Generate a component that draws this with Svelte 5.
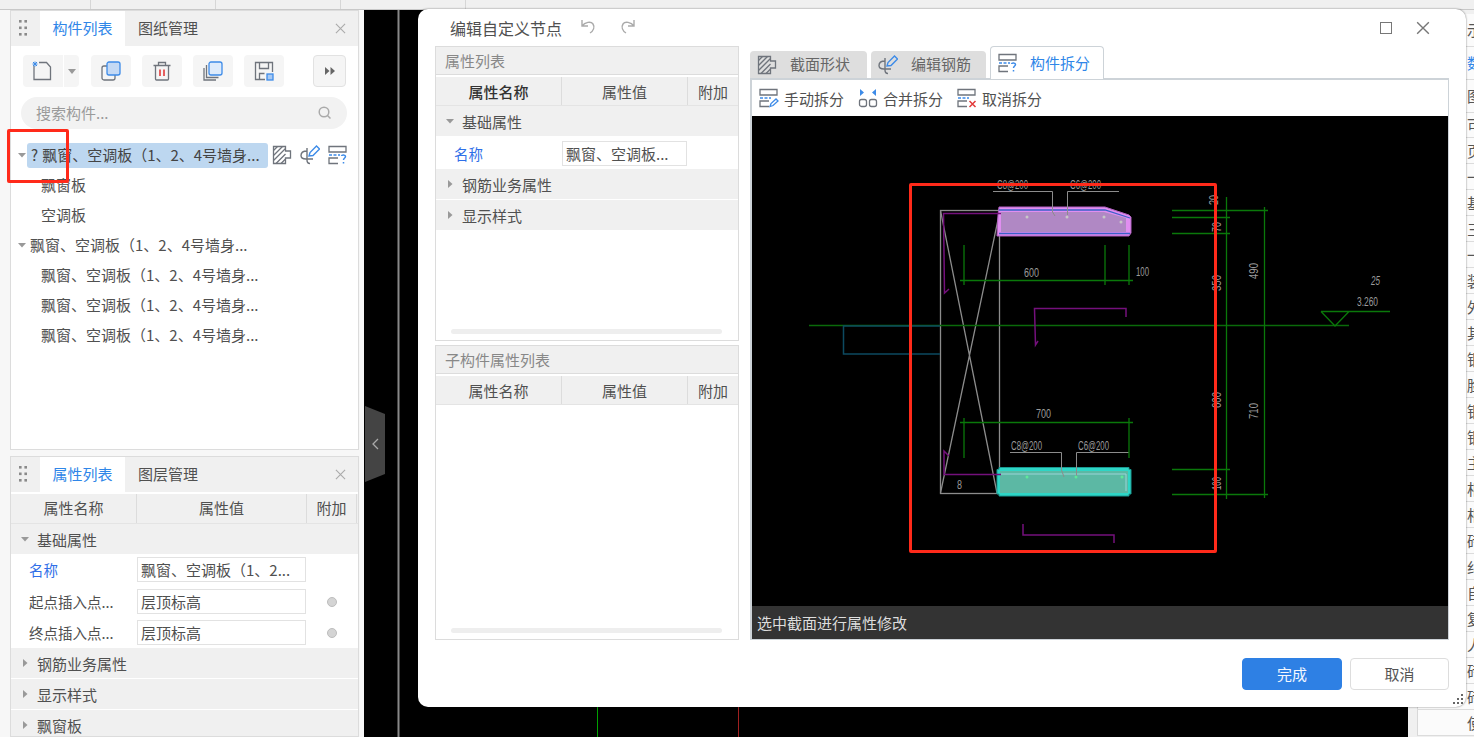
<script>
	const longName = '飘窗、空调板（1、2、4号墙身...';
	const tree = [
		{ label: '飘窗板', child: true },
		{ label: '空调板', child: true },
		{ label: longName, child: false },
		{ label: longName, child: true },
		{ label: longName, child: true },
		{ label: longName, child: true }
	];
	const rightEdge = ['示', '数', '图', '可', '页', '一', '基', '三', '一', '装', '外', '其', '钢', '脸', '钢', '钢', '主', '相', '相', '砖', '纠', '自', '复', '人', '砖', '砖', '使'];
	const cells = [91, 125, 125, 125];
</script>

{#snippet grip()}
	<svg class="grip" width="8" height="18" viewBox="0 0 8 18">
		{#each [0, 6.5, 13] as y}
			<rect x="0" {y} width="2.6" height="2.6" fill="#8a8a8a" />
			<rect x="5.4" {y} width="2.6" height="2.6" fill="#8a8a8a" />
		{/each}
	</svg>
{/snippet}

{#snippet closeX(size, colour)}
	<svg width={size} height={size} viewBox="0 0 12 12" fill="none" stroke={colour} stroke-width="1.2">
		<path d="M1 1l10 10M11 1L1 11" />
	</svg>
{/snippet}

{#snippet hatchIcon()}
	<svg width="20" height="20" viewBox="0 0 20 20" fill="none" stroke="#6f747c" stroke-width="1.3">
		<path d="M1.5 1.5h12v4.5h5v7h-5v5.5h-12z" />
		<path d="M1.5 5.5l4-4M1.5 10.5l9-9M1.5 15.5l12-12M4 18.500l9.500-9.500M9 18.500l4.500-4.500" />
	</svg>
{/snippet}

{#snippet rebarIcon()}
	<svg width="20" height="20" viewBox="0 0 20 20" fill="none" stroke-width="1.4">
		<path d="M7 6C3 6 1 8 1 10.500C1 13 3 14 6 14H13M7 3V15C7 17 8 18.500 10 18.500" stroke="#6f747c" />
		<path d="M9 11l1-3.500L16.500 1l3 3L13 10.500z" stroke="#3d8be8" />
	</svg>
{/snippet}

{#snippet splitIcon(mark)}
	<svg width="20" height="20" viewBox="0 0 20 20" fill="none" stroke-width="1.3">
		<path d="M1 7V1.500h17V7zM10 13H1v5.500h9" stroke="#6f747c" />
		<path d="M1 10h11" stroke="#3d8be8" stroke-dasharray="3 1.500" />
		{#if mark === 'q'}
			<path d="M13.500 11c.2-1.500 4-1.500 4 .5c0 1.500-2 1.500-2 3.500M15.500 17v1.600" stroke="#3d8be8" stroke-width="1.500" />
		{:else if mark === 'pen'}
			<path d="M11 18.500l1-3l5-4.500l2 2l-5 4.500z" stroke="#3d8be8" />
		{:else}
			<path d="M12.500 13l6 6M18.500 13l-6 6" stroke="#e23a3a" stroke-width="1.500" />
		{/if}
	</svg>
{/snippet}

{#snippet caret(open)}
	<svg class="caret" width="8" height="8" viewBox="0 0 8 8">
		{#if open}
			<path d="M0 2h8L4 6.500z" fill="#999" />
		{:else}
			<path d="M2 0l4.500 4L2 8z" fill="#999" />
		{/if}
	</svg>
{/snippet}

{#snippet propHead()}
	<div class="prop-head">
		<span>属性名称</span>
		<span>属性值</span>
		<span>附加</span>
	</div>
{/snippet}

{#snippet group(label, open)}
	<div class="group">
		{@render caret(open)}
		<span>{label}</span>
	</div>
{/snippet}

{#snippet propRow(label, value, isBlue, hasDot)}
	<div class="prop-row">
		<span class="prop-name" class:blue={isBlue}>{label}</span>
		<span class="prop-value">{value}</span>
		<span class="prop-extra">
			{#if hasDot}<i class="dot"></i>{/if}
		</span>
	</div>
{/snippet}

<div class="page">
	<div class="top-strip">
		{#each cells as width}
			<i class="top-cell" style="width: {width}px"></i>
		{/each}
	</div>

	<div class="workspace">
		<aside class="left-col">
			<section class="panel panel-tree">
				<header class="panel-head">
					{@render grip()}
					<span class="tab active">构件列表</span>
					<span class="tab">图纸管理</span>
					<span class="panel-close">{@render closeX(11, '#aaa')}</span>
				</header>

				<div class="tools">
					<div class="tool tool-split">
						<svg width="20" height="20" viewBox="0 0 20 20" fill="none">
							<path d="M2 5V18.500h16.500V6l-4-4.500H7" stroke="#6f747c" stroke-width="1.300" />
							<path d="M1 1l4 4M5 1L1 5M3 .5v5M.5 3h5" stroke="#3d8be8" stroke-width="1" />
						</svg>
						<span class="tool-drop"><svg width="8" height="5" viewBox="0 0 8 5"><path d="M0 0h8L4 5z" fill="#999" /></svg></span>
					</div>
					<div class="tool">
						<svg width="20" height="20" viewBox="0 0 20 20" fill="none" stroke="#6f747c" stroke-width="1.300">
							<rect x="1" y="5" width="13" height="14" rx="2" />
							<rect x="6" y="1" width="13" height="13" rx="2" fill="#c4d9f4" stroke="#3d8be8" />
						</svg>
					</div>
					<div class="tool">
						<svg width="20" height="20" viewBox="0 0 20 20" fill="none" stroke="#6f747c" stroke-width="1.300">
							<path d="M1.500 4.500h17M6.500 4.500V1.500h7v3M3.500 4.500v13.500c0 .5.500 1 1 1h11c.5 0 1-.5 1-1V4.500" />
							<path d="M8 8.500v6.500M12 8.500v6.500" stroke="#e23a3a" stroke-width="1.600" />
						</svg>
					</div>
					<div class="tool">
						<svg width="20" height="20" viewBox="0 0 20 20" fill="none" stroke="#6f747c" stroke-width="1.300">
							<path d="M3.500 4v12.500h12M1 7v12h12" />
							<rect x="6" y="1" width="13" height="13" rx="2" fill="#deebfb" stroke="#3d8be8" />
						</svg>
					</div>
					<div class="tool">
						<svg width="20" height="20" viewBox="0 0 20 20" fill="none" stroke="#6f747c" stroke-width="1.300">
							<path d="M11 18.500H1.500v-17h17V11" />
							<path d="M5.500 1.500v6h9v-6M5.500 18.500v-6h5" />
							<rect x="13" y="13" width="6" height="6" fill="#a8c9f2" stroke="#3d8be8" />
						</svg>
					</div>
					<div class="tool tool-more">
						<svg width="10" height="8" viewBox="0 0 10 8"><path d="M0 0l4.500 4L0 8zM5.500 0L10 4L5.500 8z" fill="#666" /></svg>
					</div>
				</div>

				<div class="search">
					<span class="search-text">搜索构件...</span>
					<svg width="14" height="14" viewBox="0 0 14 14" fill="none" stroke="#aaa" stroke-width="1.500">
						<circle cx="6" cy="6" r="4.800" />
						<path d="M9.500 9.500l3 3" />
					</svg>
				</div>

				<div class="tree">
					<div class="tree-row">
						{@render caret(true)}
						<span class="tree-selected"><span class="tree-mark">?</span>{longName}</span>
						<span class="tree-actions">
							{@render hatchIcon()}
							{@render rebarIcon()}
							{@render splitIcon('q')}
						</span>
					</div>
					{#each tree as row}
						<div class="tree-row" class:child={row.child}>
							{#if !row.child}{@render caret(true)}{/if}
							<span class="tree-label">{row.label}</span>
						</div>
					{/each}
				</div>
			</section>

			<section class="panel panel-props">
				<header class="panel-head">
					{@render grip()}
					<span class="tab active">属性列表</span>
					<span class="tab">图层管理</span>
					<span class="panel-close">{@render closeX(11, '#aaa')}</span>
				</header>
				<div class="props main-props">
					{@render propHead()}
					{@render group('基础属性', true)}
					{@render propRow('名称', '飘窗、空调板（1、2...', true, false)}
					{@render propRow('起点插入点...', '层顶标高', false, true)}
					{@render propRow('终点插入点...', '层顶标高', false, true)}
					{@render group('钢筋业务属性', false)}
					{@render group('显示样式', false)}
					{@render group('飘窗板', false)}
				</div>
			</section>
		</aside>

		<main class="canvas">
			<svg class="canvas-lines" width="1044" height="727" viewBox="364 10 1044 727">
				<path d="M398.500 10V737" stroke="#888" stroke-width="2" />
				<path d="M597.500 700V737" stroke="#00a000" stroke-width="1" />
				<path d="M738.500 700V737" stroke="#a02020" stroke-width="1" />
			</svg>
		</main>

		<aside class="right-col">
			{#each rightEdge as word, i}
				<div class="edge-row" class:blue={i === 1}>{word}</div>
			{/each}
		</aside>
	</div>

	<div class="collapse-tab">
		<svg width="7" height="12" viewBox="0 0 7 12" fill="none" stroke="#aaa" stroke-width="1.300"><path d="M6 1L1 6l5 5" /></svg>
	</div>

	<div class="dialog">
		<header class="dialog-head">
			<span class="dialog-title">编辑自定义节点</span>
			<svg class="undo" width="18" height="16" viewBox="0 0 18 16" fill="none" stroke="#aaa" stroke-width="1.400">
				<path d="M2 1v6h6M2 7c3-4 9-5 11-2c2 3 .5 7-3 9" />
			</svg>
			<svg class="redo" width="18" height="16" viewBox="0 0 18 16" fill="none" stroke="#aaa" stroke-width="1.400">
				<path d="M16 1v6h-6M16 7c-3-4-9-5-11-2c-2 3-.5 7 3 9" />
			</svg>
			<span class="win-max"></span>
			<span class="win-close">{@render closeX(14, '#777')}</span>
		</header>

		<div class="dialog-body">
			<div class="attr-col">
				<section class="attr-box">
					<div class="attr-title">属性列表</div>
					<div class="props dialog-props">
						<div class="bold-head">{@render propHead()}</div>
						{@render group('基础属性', true)}
						{@render propRow('名称', '飘窗、空调板...', true, false)}
						{@render group('钢筋业务属性', false)}
						{@render group('显示样式', false)}
					</div>
					<div class="scroll-track"></div>
				</section>
				<section class="attr-box">
					<div class="attr-title">子构件属性列表</div>
					<div class="props dialog-props">
						{@render propHead()}
					</div>
					<div class="scroll-track"></div>
				</section>
			</div>

			<div class="view-col">
				<div class="view-tabs">
					<div class="view-tab">{@render hatchIcon()}<span>截面形状</span></div>
					<div class="view-tab">{@render rebarIcon()}<span>编辑钢筋</span></div>
					<div class="view-tab active">{@render splitIcon('q')}<span>构件拆分</span></div>
				</div>
				<div class="view-box">
					<div class="view-tools">
						<span class="view-tool">{@render splitIcon('pen')}手动拆分</span>
						<span class="view-tool">
							<svg width="20" height="20" viewBox="0 0 20 20" fill="none">
								<path d="M2 1l4 3.500l-4 3.500zM18 1l-4 3.500l4 3.500z" fill="#3d8be8" />
								<rect x="1.500" y="11.500" width="7" height="7" rx="2" stroke="#6f747c" stroke-width="1.300" />
								<rect x="11.500" y="11.500" width="7" height="7" rx="2" stroke="#6f747c" stroke-width="1.300" />
							</svg>
							合并拆分
						</span>
						<span class="view-tool">{@render splitIcon('x')}取消拆分</span>
					</div>

					<svg class="cad" width="696" height="490" viewBox="752 116 696 490" fill="none">
						<!-- wall outline and cross -->
						<g stroke="#8c8c8c" stroke-width="1.300">
							<rect x="940.500" y="210.500" width="59" height="283" />
							<path d="M940.500 210.500L997 493M999 215L940.500 493" />
						</g>

						<!-- axis and blue outline -->
						<path d="M809 325.500H1349" stroke="#0a6a0a" stroke-width="1.500" />
						<path d="M940 326H843.500V354H940" stroke="#0c4a60" stroke-width="1.500" />

						<!-- purple section -->
						<path d="M999 207H1105L1129 215L1131 217V233L1129 236H997L998 215z" fill="#e08ef0" stroke="#b060c0" />
						<path d="M1001 212H1104L1126 218V232H1001z" fill="#b088c4" />
						<path d="M999 210H1105L1130 218M999 233.500H1130" stroke="#3a62c8" stroke-width="1.300" />

						<!-- teal section -->
						<path d="M999 467.500H1129V469.500H1131V494H1129V496H999V494H997V469.500H999z" fill="#2ed6c6" stroke="#1a9a92" />
						<path d="M1000 471H1128V493H1000z" fill="#5cb8a4" />
						<path d="M1001 474H1126V491" stroke="#9ad4d8" stroke-width="1" />

						<!-- purple rebar lines -->
						<g stroke="#74107c" stroke-width="1.500">
							<path d="M1001 213.500H943.500L944.500 293L949 289" />
							<path d="M1126 317V308.500H1034.500L1035.500 345L1038 341" />
							<path d="M949 456L944 451V474.500H1001" />
							<path d="M1023 524V535H1114V543" />
						</g>

						<!-- leaders -->
						<g stroke="#8c8c8c" stroke-width="1">
							<path d="M993 191.500H1052.500V212L1055 216" />
							<path d="M1119 191.500H1067.500V215" />
							<path d="M1010 452.500H1061.500V470L1064 477" />
							<path d="M1129 452.500H1076.500V477" />
						</g>

						<!-- dimension lines -->
						<g stroke="#0a780a" stroke-width="1.300">
							<path d="M964 245V285M1105 245V285M1129 245V285M960 280.500H1133" />
							<path d="M964 418V458M1129 418V458M960 422.500H1133" />
							<path d="M1172 210.500H1268M1172 217.500H1230M1172 233.500H1230M1172 469.500H1230M1172 494.500H1268" />
							<path d="M1226.500 197V499M1264.500 207V498" />
							<path d="M1321 311.500H1390M1321 311.500L1335 326L1349 311.500" />
						</g>

						<!-- rebar dots -->
						<g fill="#c8c8c8">
							<circle cx="1027" cy="217" r="1.500" />
							<circle cx="1067" cy="217" r="1.500" />
							<circle cx="1104" cy="217" r="1.500" />
							<circle cx="1121" cy="222" r="1.500" />
						</g>
						<g fill="#5ee89a">
							<circle cx="1027" cy="477" r="1.500" />
							<circle cx="1076" cy="477" r="1.500" />
							<circle cx="1122" cy="477" r="1.500" />
						</g>

						<!-- labels -->
						<g class="cad-text">
							<text x="997" y="189" textLength="31" lengthAdjust="spacingAndGlyphs">C8@200</text>
							<text x="1070" y="189" textLength="31" lengthAdjust="spacingAndGlyphs">C6@200</text>
							<text x="1024" y="277" textLength="15" lengthAdjust="spacingAndGlyphs">600</text>
							<text x="1136" y="276" textLength="13" lengthAdjust="spacingAndGlyphs">100</text>
							<text x="1036" y="418" textLength="15" lengthAdjust="spacingAndGlyphs">700</text>
							<text x="1011" y="450" textLength="31" lengthAdjust="spacingAndGlyphs">C8@200</text>
							<text x="1078" y="450" textLength="31" lengthAdjust="spacingAndGlyphs">C6@200</text>
							<text x="1357" y="306" textLength="21" lengthAdjust="spacingAndGlyphs">3.260</text>
							<text x="1371" y="285" textLength="9" lengthAdjust="spacingAndGlyphs" font-style="italic">25</text>
							<text x="957" y="489" textLength="5" lengthAdjust="spacingAndGlyphs">8</text>
							<text transform="translate(1218 205) rotate(-90)" textLength="10" lengthAdjust="spacingAndGlyphs">20</text>
							<text transform="translate(1221 232) rotate(-90)" textLength="10" lengthAdjust="spacingAndGlyphs">70</text>
							<text transform="translate(1221 291) rotate(-90)" textLength="16" lengthAdjust="spacingAndGlyphs">350</text>
							<text transform="translate(1258 279) rotate(-90)" textLength="16" lengthAdjust="spacingAndGlyphs">490</text>
							<text transform="translate(1221 408) rotate(-90)" textLength="16" lengthAdjust="spacingAndGlyphs">600</text>
							<text transform="translate(1258 419) rotate(-90)" textLength="16" lengthAdjust="spacingAndGlyphs">710</text>
							<text transform="translate(1221 490) rotate(-90)" textLength="13" lengthAdjust="spacingAndGlyphs">100</text>
						</g>
					</svg>

					<div class="view-status">选中截面进行属性修改</div>
				</div>
			</div>
		</div>

		<footer class="dialog-foot">
			<button class="btn primary">完成</button>
			<button class="btn">取消</button>
		</footer>

		<svg class="resize-grip" width="10" height="10" viewBox="0 0 10 10">
			<path d="M8 0h2v2H8zM4 4h2v2H4zM8 4h2v2H8zM0 8h2v2H0zM4 8h2v2H4zM8 8h2v2H8z" fill="#666" />
		</svg>
	</div>

	<!-- red markup drawn over the screenshot -->
	<div class="markup markup-tree"></div>
	<div class="markup markup-cad"></div>
</div>

<style>
	:global(body) {
		margin: 0;
		background: #f0f0f0;
	}

	.page {
		position: relative;
		width: 1474px;
		height: 737px;
		overflow: hidden;
		display: flex;
		flex-direction: column;
		font-family: 'Noto Sans CJK SC', 'Noto Sans', sans-serif;
		font-size: 15px;
		color: #505050;
	}

	.top-strip {
		height: 9px;
		flex: none;
		display: flex;
		background: #f0f0f0;
		border-bottom: 1px solid #c8c8c8;
	}

	.top-cell {
		border-right: 1px solid #d6d6d6;
		box-sizing: border-box;
	}

	.workspace {
		flex: 1;
		min-height: 0;
		display: flex;
	}

	.left-col {
		width: 364px;
		flex: none;
		box-sizing: border-box;
		padding-left: 10px;
		background: #f7f7f7;
		display: flex;
		flex-direction: column;
		gap: 6px;
	}

	.panel {
		width: 349px;
		box-sizing: border-box;
		background: #fff;
		border: 1px solid #dcdcdc;
	}

	.panel-tree {
		height: 440px;
	}

	.panel-props {
		flex: 1;
		min-height: 0;
		overflow: hidden;
	}

	.panel-head {
		height: 35px;
		display: flex;
		align-items: stretch;
		background: #f0f0f0;
		position: relative;
	}

	.grip {
		margin: 9px 13px 0 8px;
		flex: none;
	}

	.tab {
		width: 85px;
		display: flex;
		align-items: center;
		justify-content: center;
		flex: none;
		box-sizing: border-box;
		padding-bottom: 2px;
	}

	.tab.active {
		background: #fff;
		color: #2f86e8;
	}

	.tab + .tab {
		width: 86px;
	}

	.panel-close {
		margin-left: auto;
		margin-right: 12px;
		display: flex;
		align-items: center;
	}

	.tools {
		display: flex;
		padding: 9px 0 0 12px;
		height: 32px;
	}

	.tool {
		width: 40px;
		height: 32px;
		background: #f5f5f5;
		border-radius: 4px;
		display: flex;
		align-items: center;
		justify-content: center;
		margin-right: 11px;
		flex: none;
	}

	.tool-split {
		width: 56px;
		margin-right: 12px;
		justify-content: flex-start;
		padding-left: 9px;
		box-sizing: border-box;
	}

	.tool-drop {
		margin-left: 11px;
		padding-left: 4px;
		height: 32px;
		display: flex;
		align-items: center;
		border-left: 1px solid #fff;
	}

	.tool-more {
		width: 33px;
		height: 32px;
		box-sizing: border-box;
		border: 1px solid #e2e2e2;
		margin-left: 18px;
		margin-right: 0;
	}

	.search {
		margin: 10px 0 0 10px;
		width: 326px;
		height: 32px;
		background: #f2f2f2;
		border-radius: 16px;
		box-sizing: border-box;
		padding: 0 15px;
		display: flex;
		align-items: center;
		justify-content: space-between;
		color: #9a9a9a;
	}

	.search-text {
		margin-top: -2px;
	}

	.tree {
		margin-top: 11px;
	}

	.tree-row {
		height: 30px;
		display: flex;
		align-items: center;
		padding-left: 7px;
		white-space: nowrap;
	}

	.tree-row .caret {
		margin-right: 4px;
		flex: none;
	}

	.tree-row.child {
		padding-left: 30px;
	}

	.tree-label {
		margin-top: -2px;
	}

	.tree-selected {
		width: 241px;
		height: 25px;
		line-height: 23px;
		background: #bdd7f0;
		border-radius: 3px;
		box-sizing: border-box;
		padding-left: 4px;
		margin-left: -3px;
		overflow: hidden;
		color: #444;
		flex: none;
	}

	.tree-mark {
		margin-right: 4px;
	}

	.tree-actions {
		display: flex;
		gap: 8px;
		margin-left: 4px;
	}

	.props {
		display: flex;
		flex-direction: column;
		--col-a: 126px;
		--col-b: 170px;
		--col-c: 50px;
		--row-h: 31px;
	}

	.dialog-props {
		--col-a: 126px;
		--col-b: 126px;
		--col-c: 50px;
		--row-h: 32px;
	}

	.prop-head {
		margin-top: 2px;
		height: 30px;
		display: grid;
		grid-template-columns: var(--col-a) var(--col-b) var(--col-c);
		background: #f0f0f0;
		border-bottom: 1px solid #e4e4e4;
		box-sizing: border-box;
	}

	.dialog-props .prop-head {
		height: 29px;
	}

	.prop-head span {
		display: flex;
		align-items: center;
		justify-content: center;
		border-right: 1px solid #dcdcdc;
	}

	.main-props .prop-head span {
		padding-bottom: 2px;
	}

	.bold-head .prop-head span:first-child {
		color: #333;
		font-weight: 500;
	}

	.group {
		height: 30px;
		flex: none;
		display: flex;
		align-items: center;
		background: #f0f0f0;
		margin-bottom: 1px;
		box-sizing: border-box;
		padding-left: 10px;
	}

	.group .caret {
		margin-right: 8px;
	}

	.prop-row {
		height: var(--row-h);
		flex: none;
		display: grid;
		grid-template-columns: var(--col-a) var(--col-b) var(--col-c);
		align-items: center;
	}

	.main-props .prop-row:nth-child(3) {
		margin-top: -1px;
	}

	.main-props .prop-row:nth-child(4) {
		margin-top: 1px;
	}

	.prop-name {
		padding-left: 18px;
		white-space: nowrap;
		font-size: 14.500px;
	}

	.prop-name.blue {
		color: #2f6fe8;
	}

	.prop-value {
		height: 25px;
		line-height: 23px;
		box-sizing: border-box;
		border: 1px solid #e2e2e2;
		padding-left: 3px;
		white-space: nowrap;
		overflow: hidden;
		margin-right: 1px;
	}

	.prop-extra {
		display: flex;
		justify-content: center;
	}

	.dot {
		width: 10px;
		height: 10px;
		border-radius: 50%;
		background: #d4d4d4;
		border: 1px solid #bdbdbd;
		box-sizing: border-box;
	}

	.canvas {
		flex: 1;
		background: #000;
		min-width: 0;
	}

	.canvas-lines {
		display: block;
	}

	.right-col {
		width: 66px;
		flex: none;
		background: #f0f0f0;
		box-sizing: border-box;
		padding-top: 4px;
		overflow: hidden;
	}

	.edge-row {
		height: 26px;
		line-height: 25px;
		box-sizing: border-box;
		margin-left: 9px;
		border-left: 1px solid #d8d8d8;
		background: #fbfbfb;
		border-bottom: 1px solid #dcdcdc;
		padding-left: 49px;
		white-space: nowrap;
		overflow: hidden;
		color: #555;
	}

	.edge-row:nth-child(-n + 3) {
		height: 33px;
		line-height: 32px;
	}

	.edge-row:nth-child(4) {
		height: 25px;
		line-height: 24px;
	}

	.edge-row.blue {
		color: #2f86e8;
	}

	.collapse-tab {
		position: absolute;
		left: 365px;
		top: 406px;
		width: 20px;
		height: 76px;
		background: #444;
		clip-path: polygon(0 0, 100% 8px, 100% 68px, 0 100%);
		display: flex;
		align-items: center;
		justify-content: center;
	}

	.dialog {
		position: absolute;
		left: 418px;
		top: 9px;
		width: 1048px;
		height: 698px;
		background: #fff;
		border-radius: 10px;
		box-shadow: 0 0 2px rgba(0, 0, 0, 0.55);
		display: flex;
		flex-direction: column;
	}

	.dialog-head {
		height: 37px;
		flex: none;
		display: flex;
		align-items: center;
		padding-left: 32px;
		box-sizing: border-box;
	}

	.dialog-title {
		font-size: 16px;
		width: 130px;
		white-space: nowrap;
	}

	.undo {
		margin: 0 20px 2px 0;
	}

	.redo {
		margin-bottom: 2px;
	}

	.win-max {
		margin-left: auto;
		width: 12px;
		height: 12px;
		border: 1.500px solid #777;
		box-sizing: border-box;
		margin-right: 24px;
	}

	.win-close {
		margin-right: 36px;
		display: flex;
	}

	.dialog-body {
		height: 594px;
		flex: none;
		display: flex;
		gap: 11px;
		padding-left: 17px;
	}

	.attr-col {
		width: 304px;
		flex: none;
		display: flex;
		flex-direction: column;
		gap: 4px;
	}

	.attr-box {
		flex: 1;
		position: relative;
		box-sizing: border-box;
		border: 1px solid #dcdcdc;
	}

	.attr-title {
		height: 28px;
		line-height: 27px;
		background: #f0f0f0;
		border-bottom: 1px solid #dcdcdc;
		box-sizing: border-box;
		padding-left: 9px;
		color: #888;
	}

	.attr-box .prop-head span:last-child {
		border-right: none;
	}

	.scroll-track {
		position: absolute;
		left: 15px;
		right: 16px;
		bottom: 6px;
		height: 5px;
		border-radius: 3px;
		background: #eee;
	}

	.view-col {
		width: 699px;
		flex: none;
		display: flex;
		flex-direction: column;
	}

	.view-tabs {
		height: 32px;
		flex: none;
		display: flex;
		align-items: flex-end;
		gap: 4px;
	}

	.view-tab {
		width: 117px;
		height: 27px;
		box-sizing: border-box;
		background: #dedede;
		border-radius: 4px 4px 0 0;
		display: flex;
		align-items: center;
		padding-left: 7px;
		gap: 13px;
		color: #666;
	}

	.view-tab span {
		margin-top: -2px;
	}

	.view-tab + .view-tab {
		width: 115px;
	}

	.view-tab.active {
		width: 114px;
		height: 33px;
		margin-bottom: -1px;
		background: #fff;
		border: 1px solid #cdd3d8;
		border-bottom: none;
		color: #2f86e8;
		gap: 12px;
		position: relative;
	}

	.view-box {
		flex: 1;
		min-height: 0;
		border: 2px solid #cdd3d8;
		border-right-width: 1px;
		border-bottom-width: 1px;
		box-sizing: border-box;
		display: flex;
		flex-direction: column;
	}

	.view-tools {
		height: 36px;
		flex: none;
		display: flex;
		align-items: center;
		padding-left: 7px;
		gap: 14px;
	}

	.view-tool {
		display: flex;
		align-items: center;
		gap: 5px;
		white-space: nowrap;
	}

	.cad {
		display: block;
		background: #000;
		flex: none;
	}

	.cad-text text {
		font-family: 'Liberation Sans', sans-serif;
		font-size: 12px;
		fill: #9a9a9a;
		stroke: none;
	}

	.view-status {
		flex: 1;
		background: #333;
		color: #ddd;
		display: flex;
		align-items: center;
		padding-left: 5px;
	}

	.dialog-foot {
		display: flex;
		justify-content: flex-end;
		gap: 8px;
		padding: 18px 17px 0 0;
	}

	.btn {
		width: 99px;
		height: 32px;
		border: 1px solid #ddd;
		background: #fff;
		border-radius: 4px;
		font-family: inherit;
		font-size: 15px;
		color: #555;
		padding: 0 0 2px;
	}

	.btn.primary {
		width: 100px;
		background: #2e80e4;
		border-color: #2e80e4;
		color: #f4f8ff;
	}

	.resize-grip {
		position: absolute;
		right: 3px;
		bottom: 3px;
	}

	.markup {
		position: absolute;
		box-sizing: border-box;
		border: 3px solid #ff2a1a;
		border-radius: 2px;
		pointer-events: none;
	}

	.markup-tree {
		left: 7px;
		top: 129px;
		width: 62px;
		height: 54px;
	}

	.markup-cad {
		left: 909px;
		top: 183px;
		width: 308px;
		height: 370px;
	}
</style>
